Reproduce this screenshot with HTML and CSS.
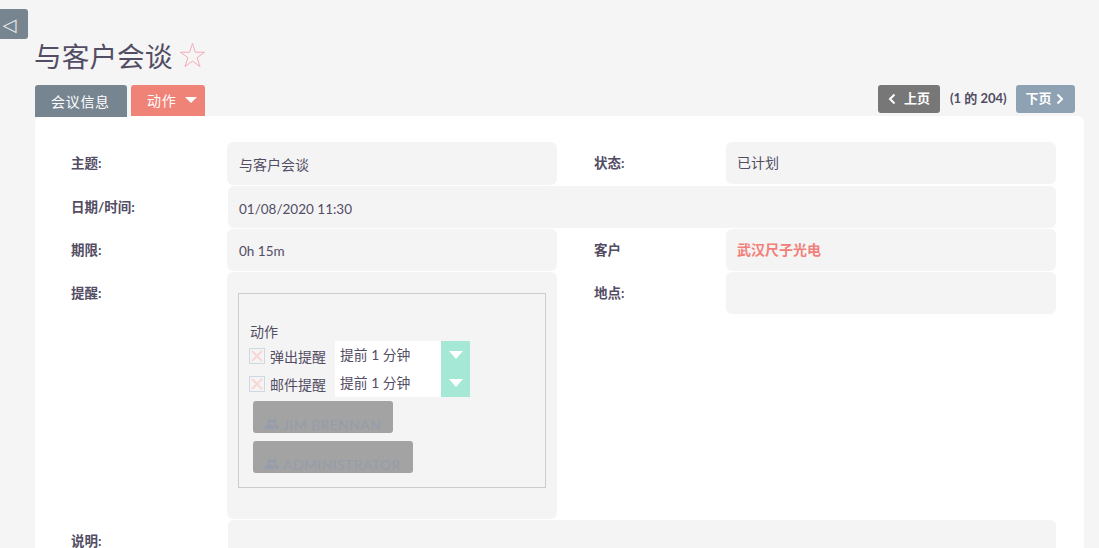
FILE: index.html
```html
<!DOCTYPE html>
<html lang="zh-CN">
<head>
    <meta charset="UTF-8">
    <meta name="viewport" content="width=device-width, initial-scale=1.0">
    <title>与客户会谈</title>
    <link rel="stylesheet" href="styles.css">
</head>
<body>
    <button class="sidebar-toggle" type="button">◁</button>

    <div class="content">
        <h1 class="title">
            <span>与客户会谈</span>
            <svg class="star" width="27" height="27" viewBox="0 0 28 28">
                <polygon points="14,1.5 17,10.6 26.5,10.6 18.8,16.300 21.800,25.500 14,19.800 6.200,25.500 9.200,16.300 1.500,10.600 11,10.600"/>
            </svg>
        </h1>

        <div class="toolbar">
            <ul class="tabs">
                <li class="tab">会议信息</li>
                <li class="tab tab-action">动作<span class="caret"></span></li>
            </ul>
            <div class="pager">
                <a class="page-btn page-prev">
                    <svg width="8" height="12" viewBox="0 0 8 12"><path d="M6.500 1.500 2 6l4.500 4.500"/></svg>
                    上页
                </a>
                <span class="page-count">(1 的 204)</span>
                <a class="page-btn page-next">
                    下页
                    <svg width="8" height="12" viewBox="0 0 8 12"><path d="M1.500 1.500 6 6l-4.500 4.500"/></svg>
                </a>
            </div>
        </div>

        <div class="panel">
            <div class="row row-first">
                <div class="label">主题:</div>
                <div class="value value-cjk">与客户会谈</div>
                <div class="label label-right">状态:</div>
                <div class="value value-status">已计划</div>
            </div>
            <div class="row">
                <div class="label">日期/时间:</div>
                <div class="value value-wide">01/08/2020 11:30</div>
            </div>
            <div class="row">
                <div class="label">期限:</div>
                <div class="value value-time">0h 15m</div>
                <div class="label label-right">客户</div>
                <div class="value value-link">武汉尺子光电</div>
            </div>
            <div class="row row-reminder">
                <div class="label">提醒:</div>
                <div class="value value-reminder">
                    <div class="reminder-box">
                        <div class="reminder-head">动作</div>
                        <div class="reminder-options">
                            <div class="checks">
                                <label class="check"><span class="checkbox"><svg width="14" height="14" viewBox="0 0 14 14"><path d="M2 2l10 10M12 2 2 12"/></svg></span>弹出提醒</label>
                                <label class="check"><span class="checkbox"><svg width="14" height="14" viewBox="0 0 14 14"><path d="M2 2l10 10M12 2 2 12"/></svg></span>邮件提醒</label>
                            </div>
                            <div class="selects">
                                <div class="select"><span class="select-text">提前 1 分钟</span><span class="select-arrow"></span></div>
                                <div class="select"><span class="select-text">提前 1 分钟</span><span class="select-arrow"></span></div>
                            </div>
                        </div>
                        <div class="invitee invitee-short">
                            <svg width="14" height="10" viewBox="0 0 14 10"><path d="M4.500 4.500a2.200 2.200 0 1 0 0-4.400 2.200 2.200 0 0 0 0 4.400zm5 0a2.200 2.200 0 1 0 0-4.400 2.200 2.200 0 0 0 0 4.400zM4.500 5.600C2.600 5.600 0 6.500 0 8v2h9V8c0-1.500-2.600-2.400-4.500-2.400zm5 0c-.3 0-.6 0-.9.100C9.500 6.300 10 7.100 10 8v2h4V8c0-1.500-2.600-2.400-4.500-2.400z"/></svg>
                            JIM BRENNAN
                        </div>
                        <div class="invitee invitee-long">
                            <svg width="14" height="10" viewBox="0 0 14 10"><path d="M4.500 4.500a2.200 2.200 0 1 0 0-4.400 2.200 2.200 0 0 0 0 4.400zm5 0a2.200 2.200 0 1 0 0-4.400 2.200 2.200 0 0 0 0 4.400zM4.500 5.600C2.600 5.600 0 6.500 0 8v2h9V8c0-1.500-2.600-2.400-4.500-2.400zm5 0c-.3 0-.6 0-.9.100C9.500 6.300 10 7.100 10 8v2h4V8c0-1.500-2.600-2.400-4.500-2.400z"/></svg>
                            ADMINISTRATOR
                        </div>
                    </div>
                </div>
                <div class="label label-right">地点:</div>
                <div class="value value-place"></div>
            </div>
            <div class="row row-desc">
                <div class="label">说明:</div>
                <div class="value value-wide"></div>
            </div>
        </div>
    </div>
</body>
</html>
```

FILE: styles.css
```css
html, body {
    height: 100%;
}

body {
    margin: 0;
    background-color: #f5f5f5;
    color: #534d64;
    font-family: Lato, "Noto Sans CJK SC", sans-serif;
    font-size: 13.5px;
    overflow: hidden;
}

.sidebar-toggle {
    position: absolute;
    top: 9px;
    left: 0;
    width: 28px;
    height: 30px;
    padding: 0 9px 0 0;
    border: none;
    border-radius: 0 3px 3px 0;
    background-color: #778591;
    color: #eee;
    font-family: "DejaVu Sans", sans-serif;
    font-size: 18px;
}

.content {
    width: 1049px;
    margin-left: 35px;
}

.title {
    display: flex;
    align-items: center;
    gap: 7px;
    height: 85px;
    margin: 0 0 0 -1px;
    padding-top: 25px;
    box-sizing: border-box;
    font-size: 27.700px;
    font-weight: 400;
}

.star polygon {
    fill: none;
    stroke: #f5a8b2;
    stroke-width: 1;
}

.toolbar {
    display: flex;
    justify-content: space-between;
    height: 31px;
    padding-right: 9px;
}

.tabs {
    display: flex;
    gap: 4px;
    margin: 0;
    padding: 0;
    list-style: none;
}

.tab {
    display: flex;
    align-items: center;
    width: 92px;
    height: 32px;
    padding: 0 0 1px 16px;
    box-sizing: border-box;
    border-radius: 3px 3px 0 0;
    background-color: #778591;
    color: #fff;
    font-size: 14px;
    letter-spacing: 0.700px;
    position: relative;
    z-index: 1;
}

.tab-action {
    width: 74px;
    height: 31px;
    background-color: #f08377;
}

.caret {
    margin-left: 9px;
    border-top: 6px solid #fff;
    border-left: 6px solid transparent;
    border-right: 6px solid transparent;
}

.pager {
    display: flex;
    align-items: flex-start;
}

.page-btn {
    display: flex;
    align-items: center;
    justify-content: center;
    gap: 8px;
    height: 28px;
    padding-bottom: 4px;
    box-sizing: border-box;
    border-radius: 3px;
    color: #fff;
    font-size: 13px;
    font-weight: 700;
}

.page-btn svg {
    margin-top: 4px;
    fill: none;
    stroke: #fff;
    stroke-width: 2;
}

.page-prev {
    width: 62px;
    background-color: #777;
}

.page-next {
    width: 59px;
    gap: 4px;
    padding-right: 2px;
    background-color: #8fa2b4;
}

.page-count {
    width: 66px;
    margin-left: 10px;
    font-size: 13px;
    font-weight: 700;
    line-height: 27px;
}

.panel {
    display: flex;
    flex-direction: column;
    gap: 1px;
    height: 432px;
    padding-top: 26px;
    box-sizing: border-box;
    border-radius: 6px 6px 0 0;
    background-color: #fff;
}

.row {
    display: flex;
    flex: none;
    height: 42px;
    padding-right: 28px;
}

.row-first {
    height: 43px;
}

.row-reminder {
    height: 247px;
}

.row-desc {
    height: 60px;
}

.label {
    flex: none;
    width: 156px;
    padding: 10px 0 0 36px;
    font-size: 13.500px;
    font-weight: 700;
}

.label-right {
    width: 132px;
    padding-left: 37px;
}

.value {
    flex: none;
    width: 330px;
    height: 100%;
    padding: 12px 12px 0;
    box-sizing: border-box;
    border-radius: 6px;
    background-color: #f4f4f4;
}

.value-cjk {
    font-size: 14px;
}

.value-status {
    height: 42px;
    padding: 10px 11px 0;
    font-size: 14px;
}

.value-time {
    padding-top: 14px;
}

.value-wide {
    width: 828px;
    margin-left: 1px;
    padding: 15px 11px 0;
}

.value-link {
    padding: 10px 11px 0;
    color: #f2807a;
    font-size: 14px;
    font-weight: 700;
}

.value-reminder {
    padding: 21px 11px 0;
}

.value-place {
    height: 42px;
}

.reminder-box {
    height: 195px;
    padding: 29px 11px 0 10px;
    box-sizing: border-box;
    border: 1px solid #ccc;
}

.reminder-head {
    height: 18px;
    line-height: 17px;
    padding-left: 1px;
    font-size: 14px;
}

.reminder-options {
    display: flex;
    gap: 9px;
}

.checks {
    display: flex;
    flex-direction: column;
}

.check {
    display: flex;
    align-items: center;
    gap: 5px;
    height: 28px;
    padding-top: 2px;
    box-sizing: border-box;
    font-size: 14px;
}

.checkbox {
    display: flex;
    width: 14px;
    height: 14px;
    border: 1px solid #cfd8e0;
}

.checkbox svg {
    fill: none;
    stroke: #f8d6d6;
    stroke-width: 2;
}

.select {
    display: flex;
    width: 135px;
    height: 28px;
    background-color: #fff;
}

.select-text {
    flex: 1;
    padding: 3px 0 0 5px;
    font-size: 13.800px;
}

.select-arrow {
    display: flex;
    flex: none;
    justify-content: center;
    width: 29px;
    padding-top: 10px;
    box-sizing: border-box;
    background-color: #a5e8d6;
}

.select-arrow::before {
    content: "";
    height: 0;
    border-top: 8px solid #fff;
    border-left: 7px solid transparent;
    border-right: 7px solid transparent;
}

.invitee {
    display: flex;
    align-items: center;
    gap: 4px;
    height: 32px;
    margin: 4px 0 0 4px;
    padding: 14px 0 0 12px;
    box-sizing: border-box;
    border-radius: 3px;
    background-color: #a3a3a3;
    color: #959dab;
    font-size: 14px;
    letter-spacing: 0.400px;
    white-space: nowrap;
}

.invitee svg {
    fill: #959dab;
}

.invitee-short {
    width: 140px;
}

.invitee-long {
    width: 160px;
    margin-top: 8px;
}
```
